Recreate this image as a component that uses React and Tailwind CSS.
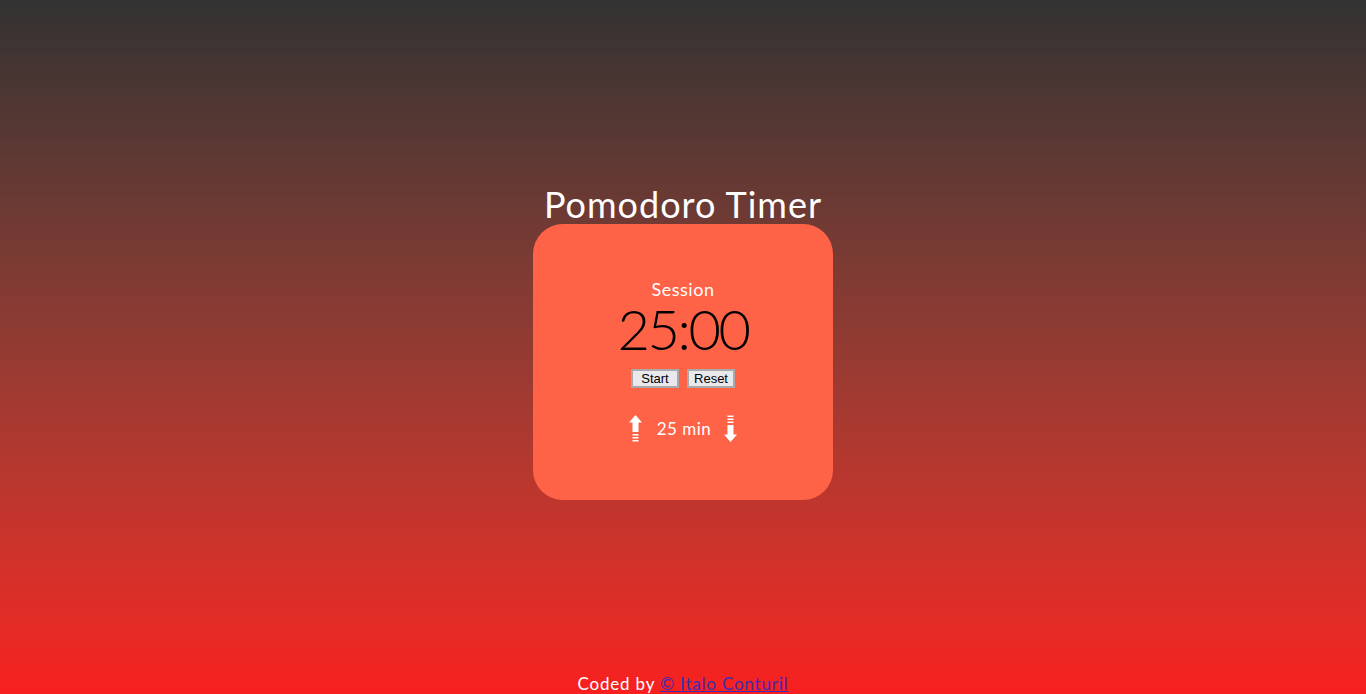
import React from "react";

function UpArrow() {
  return (
    <svg width="13" height="27" viewBox="0 0 13 27" className="block">
      <polygon points="6.5,0 13,7.5 9.5,7.5 9.5,17 3.5,17 3.5,7.5 0,7.5" fill="#fff" />
      <rect x="3.5" y="19" width="6" height="1.5" fill="#fff" />
      <rect x="3.5" y="22" width="6" height="1.5" fill="#fff" />
      <rect x="3.5" y="25" width="6" height="1.5" fill="#fff" />
    </svg>
  );
}

function DownArrow() {
  return (
    <svg width="13" height="27" viewBox="0 0 13 27" className="block">
      <rect x="3.5" y="0.5" width="6" height="1.5" fill="#fff" />
      <rect x="3.5" y="3.5" width="6" height="1.5" fill="#fff" />
      <rect x="3.5" y="6.5" width="6" height="1.5" fill="#fff" />
      <polygon points="3.5,10 9.5,10 9.5,19.5 13,19.5 6.5,27 0,19.5 3.5,19.5" fill="#fff" />
    </svg>
  );
}

export default function App() {
  return (
    <div className="min-h-screen flex flex-col bg-linear-to-b from-[#323232] to-[#f81f1f] font-['Lato',sans-serif] text-white">
      <main className="flex-1 flex flex-col items-center justify-center pt-[10px]">
        <h1 className="text-[36px] leading-[40px] tracking-[1px]">Pomodoro Timer</h1>
        <div className="w-[300px] h-[276px] rounded-[30px] bg-[#ff6347] flex flex-col items-center pt-[54px]">
          <div className="text-[18px] leading-[22px] tracking-[0.5px]">Session</div>
          <div className="text-[56px] leading-[58px] text-black font-light tracking-[-2.5px]">25:00</div>
          <div className="flex gap-[8px] mt-[11px]">
            <button className="font-['Liberation_Sans',sans-serif] text-[13px] leading-[14px] text-black bg-[#e9e9ed] border-2 border-[#a9a9a9] w-[48px] h-[19px] flex items-center justify-center">Start</button>
            <button className="font-['Liberation_Sans',sans-serif] text-[13px] leading-[14px] text-black bg-[#e9e9ed] border-2 border-[#a9a9a9] w-[48px] h-[19px] flex items-center justify-center">Reset</button>
          </div>
          <div className="flex items-center mt-[27px]">
            <UpArrow />
            <span className="text-[17px] tracking-[0.5px] ml-[15px] mr-[13px]">25 min</span>
            <DownArrow />
          </div>
        </div>
      </main>
      <footer className="text-center text-[17px] leading-[20px] tracking-[0.8px]">
        Coded by <a href="#" className="text-[#3c2cb4] underline">© Italo Conturil</a>
      </footer>
    </div>
  );
}
